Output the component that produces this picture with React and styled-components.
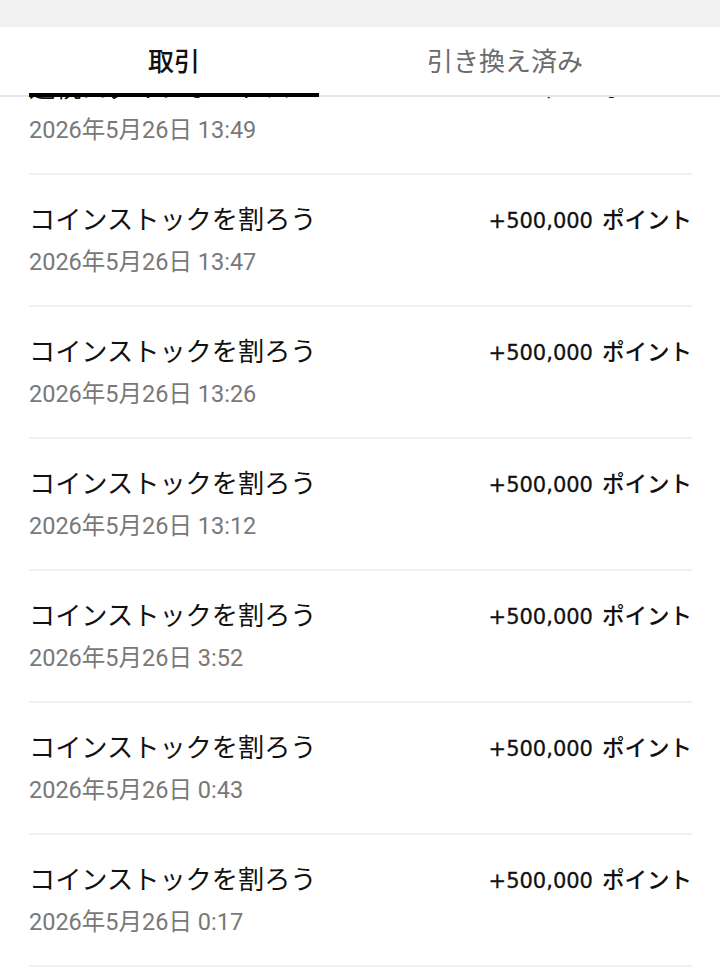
import React from "react";
import styled, { createGlobalStyle } from "styled-components";

const GlobalStyle = createGlobalStyle`
  html, body {
    margin: 0;
    padding: 0;
    background: #ffffff;
    font-family: Roboto, "Noto Sans CJK JP", "Noto Sans", sans-serif;
  }
`;

const Page = styled.div`
  width: 720px;
  height: 980px;
  display: flex;
  flex-direction: column;
  overflow: hidden;
  background: #fff;
`;

const StatusStrip = styled.div`
  height: 27px;
  flex: none;
  background: #f1f1f1;
`;

const TabBar = styled.div`
  position: relative;
  z-index: 2;
  flex: none;
  height: 68px;
  display: flex;
  padding: 0 28px 0 29px;
  background: #fff;
  border-bottom: 2px solid #e6e6e6;
`;

const Tab = styled.div`
  width: 290px;
  margin-right: ${(p) => (p.$first ? "41px" : "0")};
  display: flex;
  align-items: center;
  justify-content: center;
  position: relative;
  font-size: 26px;
  font-weight: ${(p) => (p.$active ? 500 : 400)};
  color: ${(p) => (p.$active ? "#111" : "#6b6b6b")};
  padding-bottom: 4px;
  box-sizing: border-box;

  &::after {
    content: "";
    display: ${(p) => (p.$active ? "block" : "none")};
    position: absolute;
    left: 0;
    right: 0;
    bottom: -2px;
    height: 4px;
    background: #000;
  }
`;

const List = styled.div`
  flex: 1;
  overflow: hidden;
`;

const Row = styled.div`
  margin: ${(p) => (p.$scrolled ? "-54px 28px 0 29px" : "0 28px 0 29px")};
  height: 132px;
  box-sizing: border-box;
  padding-top: 26px;
  border-bottom: 2px solid #efefef;
`;

const Line = styled.div`
  display: flex;
  justify-content: space-between;
  align-items: center;
  height: 34px;
`;

const Title = styled.span`
  font-size: 26.2px;
  color: #111;
`;

const Amount = styled.span`
  display: flex;
  align-items: baseline;
  gap: 9px;
  color: #111;
`;

const Points = styled.span`
  font-family: "DejaVu Sans", "Noto Sans CJK JP", sans-serif;
  font-size: 21px;
  -webkit-text-stroke: 0.3px #111;
`;

const Unit = styled.span`
  font-family: "Noto Sans CJK JP", sans-serif;
  font-size: 22.5px;
  font-weight: 500;
`;

const DateText = styled.div`
  margin-top: 12px;
  font-size: 23.5px;
  line-height: 30px;
  color: #787878;
`;

const rows = [
  { title: "連続ログインボーナス", amount: "+1,000", date: "2026年5月26日 13:49" },
  { title: "コインストックを割ろう", amount: "+500,000", date: "2026年5月26日 13:47" },
  { title: "コインストックを割ろう", amount: "+500,000", date: "2026年5月26日 13:26" },
  { title: "コインストックを割ろう", amount: "+500,000", date: "2026年5月26日 13:12" },
  { title: "コインストックを割ろう", amount: "+500,000", date: "2026年5月26日 3:52" },
  { title: "コインストックを割ろう", amount: "+500,000", date: "2026年5月26日 0:43" },
  { title: "コインストックを割ろう", amount: "+500,000", date: "2026年5月26日 0:17" },
  { title: "コインストックを割ろう", amount: "+500,000", date: "2026年5月25日 23:58" },
];

export default function App() {
  return (
    <>
      <GlobalStyle />
      <Page>
        <StatusStrip />
        <TabBar>
          <Tab $first $active>取引</Tab>
          <Tab>引き換え済み</Tab>
        </TabBar>
        <List>
          {rows.map((r, i) => (
            <Row key={i} $scrolled={i === 0}>
              <Line>
                <Title>{r.title}</Title>
                <Amount>
                  <Points>{r.amount}</Points>
                  <Unit>ポイント</Unit>
                </Amount>
              </Line>
              <DateText>{r.date}</DateText>
            </Row>
          ))}
        </List>
      </Page>
    </>
  );
}
